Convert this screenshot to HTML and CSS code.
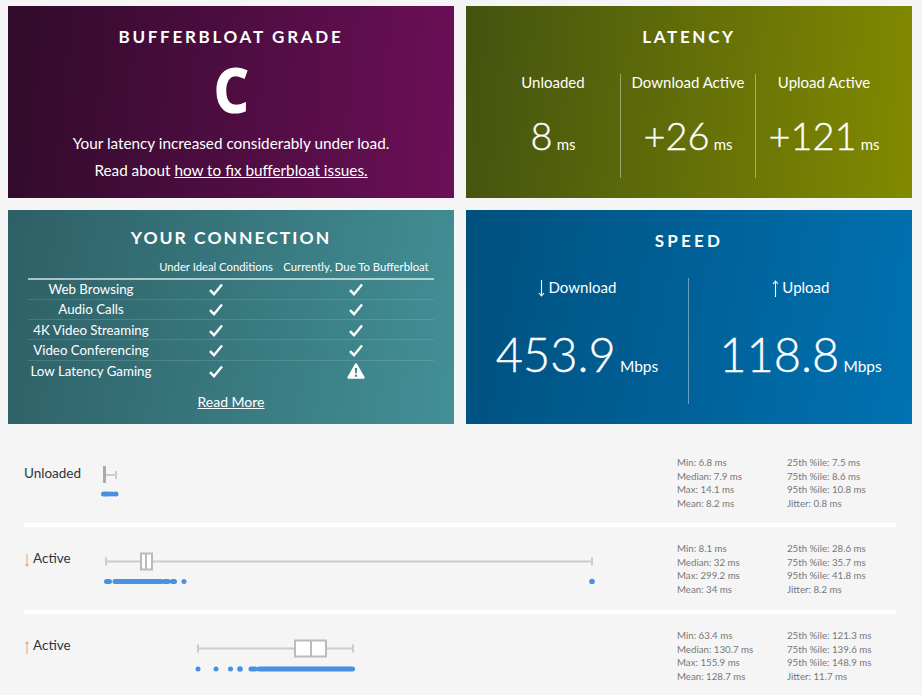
FILE: index.html
```html
<!DOCTYPE html>
<html lang="en">
<head>
<meta charset="utf-8">
<title>Bufferbloat Test Results</title>
<link rel="stylesheet" href="styles.css">
</head>
<body>
<svg class="defs" width="0" height="0" aria-hidden="true">
  <symbol id="check" viewBox="0 0 14 13"><path d="M1 7.2 L5 11.2 L13 1.6" fill="none" stroke="#fff" stroke-width="2.4"/></symbol>
  <symbol id="warn" viewBox="0 0 18 16"><path fill="#fff" fill-rule="evenodd" d="M9 .3 Q9.8 .3 10.3 1.2 L17.5 14 Q18.2 15.7 16.5 15.8 L1.5 15.8 Q-.2 15.7 .5 14 L7.7 1.2 Q8.2 .3 9 .3 Z M7.9 5 L8.2 10.6 L9.8 10.6 L10.1 5 Z M7.9 11.7 L7.9 13.7 L10.1 13.7 L10.1 11.7 Z"/></symbol>
  <symbol id="down" viewBox="0 0 7 17"><path d="M3.5 0V16M1 13L3.500 16L6 13" fill="none" stroke="currentColor" stroke-width="1.100"/></symbol>
  <symbol id="up" viewBox="0 0 7 17"><path d="M3.5 17V1M1 4L3.500 1L6 4" fill="none" stroke="currentColor" stroke-width="1.100"/></symbol>
</svg>
<main class="cards">
  <section class="card grade">
    <h2 class="title">BUFFERBLOAT GRADE</h2>
    <div class="letter"><span>C</span></div>
    <p class="note">Your latency increased considerably under load.</p>
    <p class="note">Read about <a href="#">how to fix bufferbloat issues.</a></p>
  </section>
  <section class="card latency">
    <h2 class="title">LATENCY</h2>
    <div class="metrics three">
      <div class="metric"><div class="mlabel">Unloaded</div><div class="mvalue"><b>8</b> <small>ms</small></div></div>
      <div class="metric"><div class="mlabel">Download Active</div><div class="mvalue"><b>+26</b> <small>ms</small></div></div>
      <div class="metric"><div class="mlabel">Upload Active</div><div class="mvalue"><b>+121</b> <small>ms</small></div></div>
    </div>
  </section>
  <section class="card connection">
    <h2 class="title big">YOUR CONNECTION</h2>
    <table class="conn">
      <thead><tr><th></th><th>Under Ideal Conditions</th><th>Currently, Due To Bufferbloat</th></tr></thead>
      <tbody>
        <tr><td>Web Browsing</td><td><svg class="chk"><use href="#check"/></svg></td><td><svg class="chk"><use href="#check"/></svg></td></tr>
        <tr><td>Audio Calls</td><td><svg class="chk"><use href="#check"/></svg></td><td><svg class="chk"><use href="#check"/></svg></td></tr>
        <tr><td>4K Video Streaming</td><td><svg class="chk"><use href="#check"/></svg></td><td><svg class="chk"><use href="#check"/></svg></td></tr>
        <tr><td>Video Conferencing</td><td><svg class="chk"><use href="#check"/></svg></td><td><svg class="chk"><use href="#check"/></svg></td></tr>
        <tr><td>Low Latency Gaming</td><td><svg class="chk"><use href="#check"/></svg></td><td><svg class="wrn"><use href="#warn"/></svg></td></tr>
      </tbody>
    </table>
    <a class="more" href="#">Read More</a>
  </section>
  <section class="card speed">
    <h2 class="title">SPEED</h2>
    <div class="metrics two">
      <div class="metric"><div class="mlabel"><svg class="arrow"><use href="#down"/></svg> Download</div><div class="mvalue"><b>453.9</b> <small>Mbps</small></div></div>
      <div class="metric"><div class="mlabel"><svg class="arrow"><use href="#up"/></svg> Upload</div><div class="mvalue"><b>118.8</b> <small>Mbps</small></div></div>
    </div>
  </section>
</main>
<section class="plots">
  <div class="row first">
    <div class="rlabel">Unloaded</div>
    <svg class="plot" viewBox="0 0 560 60" width="560" height="60">
      <g class="wh"><path d="M7.500 14H20M20 10V18"/></g>
      <rect class="solid" x="7" y="5" width="3" height="17"/>
      <g class="dots"><path d="M7.500 33H12.500M15.500 33H16M19.500 33H20"/></g>
    </svg>
    <div class="stats">
      <ul><li>Min: 6.8 ms</li><li>Median: 7.9 ms</li><li>Max: 14.1 ms</li><li>Mean: 8.2 ms</li></ul>
      <ul><li>25th %ile: 7.5 ms</li><li>75th %ile: 8.6 ms</li><li>95th %ile: 10.8 ms</li><li>Jitter: 0.8 ms</li></ul>
    </div>
  </div>
  <div class="row">
    <div class="rlabel"><svg class="arrow small"><use href="#down"/></svg> Active</div>
    <svg class="plot" viewBox="0 0 560 60" width="560" height="60">
      <g class="wh"><path d="M10 10.500H496M10 6.500V14.500M496 6.500V14.500"/></g>
      <rect class="box" x="45" y="2.500" width="11" height="16"/><path class="med" d="M50 2.500V18.500"/>
      <g class="dots"><path d="M10.500 30.500H13.500M19 30.500H65M68.500 30.500H72M76.500 30.500H78.500"/><circle cx="88" cy="30.500" r="2.500"/><circle cx="496" cy="30.500" r="2.800"/></g>
    </svg>
    <div class="stats">
      <ul><li>Min: 8.1 ms</li><li>Median: 32 ms</li><li>Max: 299.2 ms</li><li>Mean: 34 ms</li></ul>
      <ul><li>25th %ile: 28.6 ms</li><li>75th %ile: 35.7 ms</li><li>95th %ile: 41.8 ms</li><li>Jitter: 8.2 ms</li></ul>
    </div>
  </div>
  <div class="row">
    <div class="rlabel"><svg class="arrow small"><use href="#up"/></svg> Active</div>
    <svg class="plot" viewBox="0 0 560 60" width="560" height="60">
      <g class="wh"><path d="M102 10.500H257M102 6.500V14.500M257 6.500V14.500"/></g>
      <rect class="box" x="199" y="2.500" width="31" height="16"/><path class="med" d="M215 2.500V18.500"/>
      <g class="dots"><circle cx="102" cy="31" r="2.500"/><circle cx="120" cy="31" r="2.500"/><circle cx="134.500" cy="31" r="2.500"/><circle cx="144" cy="31" r="2.800"/><path d="M155 31H159M163 31H256.500"/></g>
    </svg>
    <div class="stats">
      <ul><li>Min: 63.4 ms</li><li>Median: 130.7 ms</li><li>Max: 155.9 ms</li><li>Mean: 128.7 ms</li></ul>
      <ul><li>25th %ile: 121.3 ms</li><li>75th %ile: 139.6 ms</li><li>95th %ile: 148.9 ms</li><li>Jitter: 11.7 ms</li></ul>
    </div>
  </div>
</section>
</body>
</html>
```
FILE: styles.css
```css
* { box-sizing: border-box; }
html, body { margin: 0; padding: 0; }
body {
  background: #f5f5f5;
  font-family: "Lato", "Noto Sans", sans-serif;
  color: #fff;
  height: 695px;
  overflow: hidden;
}
.defs { display: block; height: 0; }
.cards {
  display: grid;
  grid-template-columns: 446px 446px;
  grid-template-rows: 192px 214px;
  gap: 12px;
  padding: 6px 0 0 8px;
}
.card { text-align: center; overflow: hidden; }
.title {
  margin: 0;
  font-size: 17px;
  line-height: 22px;
  font-weight: 700;
  letter-spacing: 2.700px;
  padding-top: 20px;
}
.title.big { font-size: 17.500px; letter-spacing: 2px; padding-top: 17px; }
.grade { background: linear-gradient(95deg, #300b2b, #6c0f57); }
.latency { background: linear-gradient(95deg, #435310, #828a00); padding: 0 20px; }
.connection { background: linear-gradient(100deg, #2e5f66, #429096); padding: 0 20px; }
.speed { background: linear-gradient(100deg, #00507e, #0072b2); }
.speed .title { letter-spacing: 3.200px; }
.letter {
  font-family: "Noto Sans", sans-serif;
  font-size: 63px;
  line-height: 62px;
  font-weight: 800;
  margin-top: 10px;
}
.letter span { display: inline-block; transform: scaleX(.88); }
.note { margin: 0; font-size: 15.300px; line-height: 27px; }
.note:first-of-type { margin-top: 10px; }
a { color: inherit; }
.metrics { display: grid; }
.three { grid-template-columns: 134px 135px 137px; margin-top: 26px; }
.two { grid-template-columns: 222px 224px; margin-top: 26px; }
.metric { height: 104px; border-left: 1px solid rgba(255,255,255,.4); }
.metric:first-child { border-left: 0; }
.two .metric { height: 126px; }
.mlabel { font-size: 15px; line-height: 18px; margin-top: -1px; }
.arrow { width: 7px; height: 17px; vertical-align: -4px; }
.arrow.small { width: 6px; height: 13px; vertical-align: -4px; color: #e59a47; }
.mvalue { margin-top: 22px; white-space: nowrap; }
.mvalue b { font-weight: 300; font-size: 38px; line-height: 44px; -webkit-text-stroke: .35px #fff; }
.mvalue small { font-size: 15px; }
.two .mlabel { margin-top: 0; }
.two .mvalue { margin-top: 30px; }
.two .mvalue b { font-size: 47px; line-height: 54px; }
.two .mvalue small { font-size: 15.500px; }
.conn { width: 406px; margin: 9px auto 0; border-collapse: collapse; table-layout: fixed; }
.conn th {
  font-weight: 400;
  font-size: 11.300px;
  line-height: 16px;
  height: 21px;
  padding: 0 0 2px;
  border-bottom: 2px solid rgba(255,255,255,.6);
  white-space: nowrap;
}
.conn th:nth-child(1), .conn td:nth-child(1) { width: 126px; }
.conn th:nth-child(2) { width: 124px; }
.conn td {
  height: 20.300px;
  padding: 0;
  font-size: 13.300px;
  line-height: 18px;
  border-top: 1px solid rgba(255,255,255,.13);
  white-space: nowrap;
}
.conn tr:first-child td { border-top: 0; }
.conn svg { display: block; margin: 1px auto 0; }
.chk { width: 14px; height: 13px; }
.wrn { width: 18px; height: 16px; }
.more { display: block; margin-top: 12px; font-size: 14px; line-height: 20px; }

.plots { padding: 0 26px 0 24px; margin-top: 23px; color: #333; }
.row {
  display: flex;
  align-items: flex-start;
  height: 87px;
  padding-top: 22px;
  border-top: 4px solid #fff;
}
.row.first { height: 76px; padding-top: 17px; border-top: 0; }
.rlabel { width: 72px; flex: none; font-size: 13.500px; line-height: 18px; color: #2f3442; }
.plot { flex: none; display: block; margin-top: 2px; }
.first .plot { margin-top: -3px; }
.wh path { fill: none; stroke: #ccc; stroke-width: 2; }
.solid { fill: #aaa; }
.box { fill: #fff; stroke: #bbb; stroke-width: 2; }
.med { fill: none; stroke: #bbb; stroke-width: 2; }
.dots { fill: #4a90e2; }
.dots path { fill: none; stroke: #4a90e2; stroke-width: 5; stroke-linecap: round; }
.stats {
  display: grid;
  grid-template-columns: 110px 110px;
  margin: -7px 0 0 21px;
  font-size: 9.700px;
  line-height: 13.700px;
  color: #777;
  flex: none;
}
.first .stats { margin-top: -8px; }
.stats ul { list-style: none; margin: 0; padding: 0; white-space: nowrap; }
```
